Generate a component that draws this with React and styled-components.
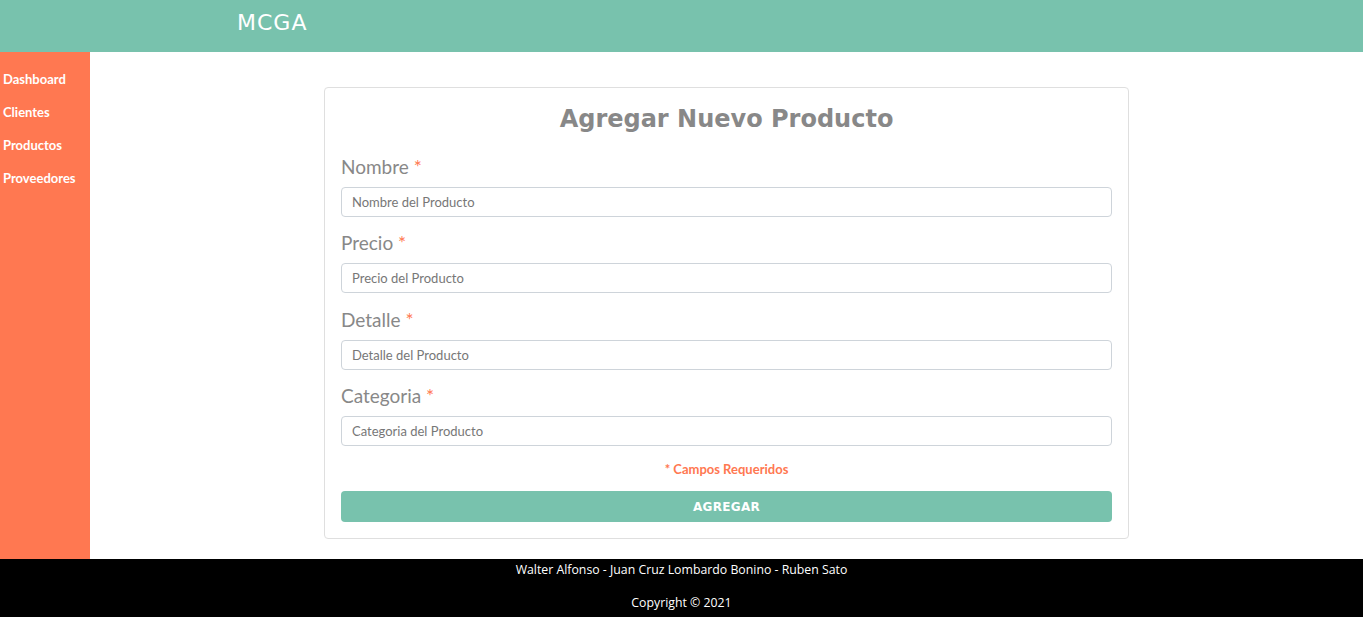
import React from "react";
import styled, { createGlobalStyle } from "styled-components";

const Global = createGlobalStyle`
  html, body { margin: 0; padding: 0; }
  body { font-family: "Lato", "Open Sans", sans-serif; background: #fff; }
  * { box-sizing: border-box; }
`;

const Page = styled.div`
  display: flex;
  flex-direction: column;
  min-height: 617px;
`;

const Header = styled.header`
  height: 52px;
  background: #78c2ad;
  display: flex;
  align-items: center;
  padding-left: 237px;
`;

const Brand = styled.div`
  font-family: "DejaVu Sans", "Open Sans", sans-serif;
  font-size: 22px;
  color: #fff;
  letter-spacing: 1px;
  margin-top: -7px;
`;

const Body = styled.div`
  height: 507px;
  display: flex;
`;

const Sidebar = styled.nav`
  width: 90px;
  background: #ff7851;
  display: flex;
  flex-direction: column;
  gap: 14px;
  padding: 18px 0 0 3px;
`;

const NavLink = styled.a`
  color: #fff;
  font-family: "Lato", sans-serif;
  font-weight: 700;
  font-size: 13px;
  line-height: 19px;
  text-decoration: none;
`;

const Main = styled.main`
  flex: 1;
  display: flex;
  justify-content: center;
  align-items: flex-start;
  padding-top: 35px;
`;

const Card = styled.section`
  width: 805px;
  border: 1px solid #dfdfdf;
  border-radius: 4px;
  padding: 14px 16px 16px;
  display: flex;
  flex-direction: column;
`;

const Title = styled.h1`
  margin: 0 0 19px;
  text-align: center;
  font-family: "DejaVu Sans", sans-serif;
  font-weight: 700;
  font-size: 24px;
  line-height: 34px;
  color: #888;
`;

const Group = styled.div`
  display: flex;
  flex-direction: column;
  margin-bottom: 14.3px;
`;

const Label = styled.label`
  font-family: "Lato", sans-serif;
  font-size: 19px;
  line-height: 24px;
  color: #888;
  margin-bottom: 8px;
`;

const Star = styled.span`
  color: #ff7851;
`;

const Input = styled.input`
  height: 30px;
  border: 1px solid #ced4da;
  border-radius: 4px;
  padding: 0 10px;
  font-family: "Lato", sans-serif;
  font-size: 13px;
  color: #555;
  &::placeholder { color: #777; }
`;

const Required = styled.p`
  margin: 0 0 13px;
  text-align: center;
  color: #ff7851;
  font-family: "Lato", sans-serif;
  font-weight: 700;
  font-size: 13px;
  line-height: 18px;
`;

const Button = styled.button`
  height: 31px;
  border: none;
  border-radius: 4px;
  background: #78c2ad;
  color: #fff;
  font-family: "DejaVu Sans", sans-serif;
  font-weight: 700;
  font-size: 12px;
  letter-spacing: 0.3px;
`;

const Footer = styled.footer`
  height: 58px;
  background: #000;
  color: #fff;
  display: flex;
  flex-direction: column;
  align-items: center;
  font-family: "Open Sans", sans-serif;
  font-size: 12.3px;
  padding-top: 2px;
  gap: 15px;
  line-height: 18px;
`;

const fields = [
  ["Nombre", "Nombre del Producto"],
  ["Precio", "Precio del Producto"],
  ["Detalle", "Detalle del Producto"],
  ["Categoria", "Categoria del Producto"],
];

export default function App() {
  return (
    <Page>
      <Global />
      <Header>
        <Brand>MCGA</Brand>
      </Header>
      <Body>
        <Sidebar>
          <NavLink href="#">Dashboard</NavLink>
          <NavLink href="#">Clientes</NavLink>
          <NavLink href="#">Productos</NavLink>
          <NavLink href="#">Proveedores</NavLink>
        </Sidebar>
        <Main>
          <Card>
            <Title>Agregar Nuevo Producto</Title>
            {fields.map(([l, p]) => (
              <Group key={l}>
                <Label>
                  {l} <Star>*</Star>
                </Label>
                <Input placeholder={p} />
              </Group>
            ))}
            <Required>* Campos Requeridos</Required>
            <Button>AGREGAR</Button>
          </Card>
        </Main>
      </Body>
      <Footer>
        <div>Walter Alfonso - Juan Cruz Lombardo Bonino - Ruben Sato</div>
        <div>Copyright © 2021</div>
      </Footer>
    </Page>
  );
}
